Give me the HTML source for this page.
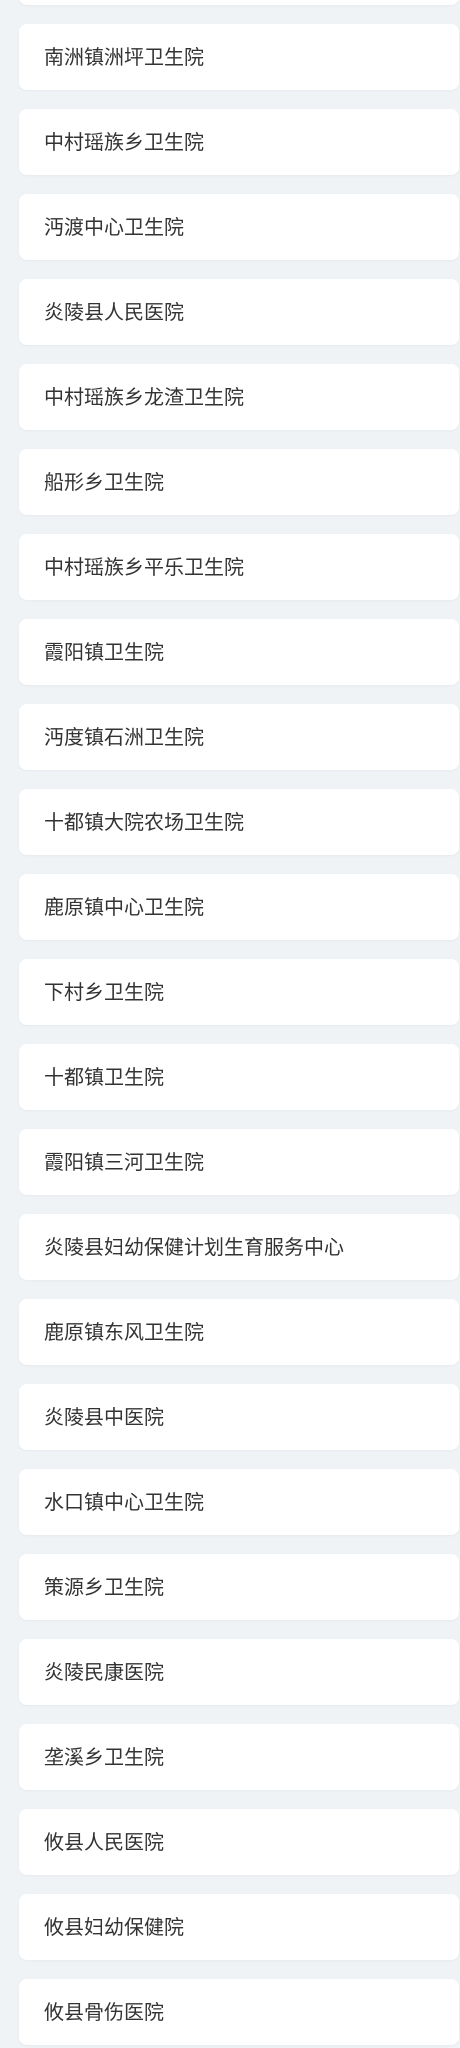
<!DOCTYPE html>
<html><head><meta charset="utf-8"><style>
html,body{margin:0;padding:0;}
body{width:460px;height:2048px;background:#eff3f6;position:relative;overflow:hidden;font-family:"Liberation Sans","Noto Sans CJK SC",sans-serif;}
.c{position:absolute;left:19px;width:440px;height:66px;background:#fff;border-radius:8px;box-sizing:border-box;padding-left:25px;padding-top:1px;line-height:66px;font-size:20px;color:#333;box-shadow:0 1px 2px rgba(0,0,0,0.04);}
</style></head><body>
<div class="c" style="top:-61px"></div>
<div class="c" style="top:24px">南洲镇洲坪卫生院</div>
<div class="c" style="top:109px">中村瑶族乡卫生院</div>
<div class="c" style="top:194px">沔渡中心卫生院</div>
<div class="c" style="top:279px">炎陵县人民医院</div>
<div class="c" style="top:364px">中村瑶族乡龙渣卫生院</div>
<div class="c" style="top:449px">船形乡卫生院</div>
<div class="c" style="top:534px">中村瑶族乡平乐卫生院</div>
<div class="c" style="top:619px">霞阳镇卫生院</div>
<div class="c" style="top:704px">沔度镇石洲卫生院</div>
<div class="c" style="top:789px">十都镇大院农场卫生院</div>
<div class="c" style="top:874px">鹿原镇中心卫生院</div>
<div class="c" style="top:959px">下村乡卫生院</div>
<div class="c" style="top:1044px">十都镇卫生院</div>
<div class="c" style="top:1129px">霞阳镇三河卫生院</div>
<div class="c" style="top:1214px">炎陵县妇幼保健计划生育服务中心</div>
<div class="c" style="top:1299px">鹿原镇东风卫生院</div>
<div class="c" style="top:1384px">炎陵县中医院</div>
<div class="c" style="top:1469px">水口镇中心卫生院</div>
<div class="c" style="top:1554px">策源乡卫生院</div>
<div class="c" style="top:1639px">炎陵民康医院</div>
<div class="c" style="top:1724px">垄溪乡卫生院</div>
<div class="c" style="top:1809px">攸县人民医院</div>
<div class="c" style="top:1894px">攸县妇幼保健院</div>
<div class="c" style="top:1979px">攸县骨伤医院</div>
</body></html>
